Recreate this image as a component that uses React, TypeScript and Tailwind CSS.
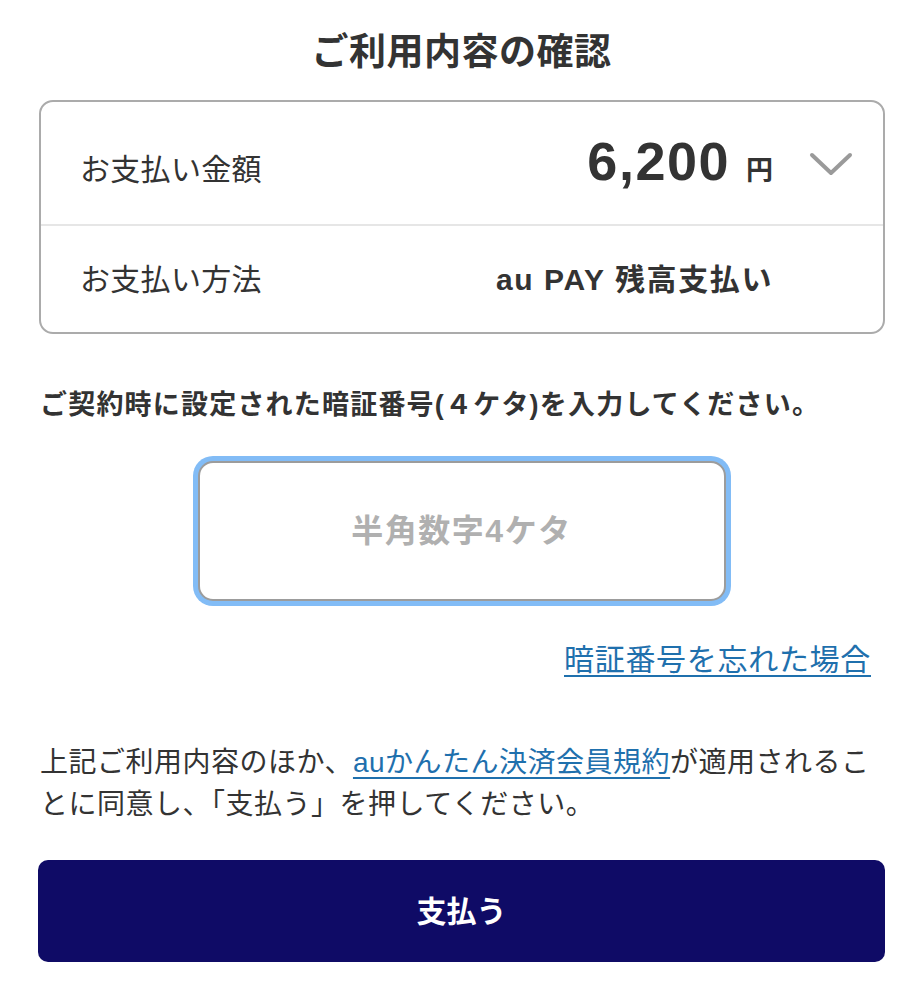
import React from 'react';

const font = { fontFamily: '"Liberation Sans", "Noto Sans CJK JP", sans-serif' };

const Chevron: React.FC = () => (
  <svg width="44" height="24" viewBox="0 0 44 24" fill="none">
    <path d="M3 3 L22 21 L41 3" stroke="#9a9a9a" strokeWidth="4" strokeLinecap="round" strokeLinejoin="round" />
  </svg>
);

const App: React.FC = () => {
  return (
    <div
      className="w-[923px] h-[999px] bg-white text-[#333] px-[38px] overflow-hidden"
      style={font}
    >
      {/* Title */}
      <div className="h-[100px] flex items-center justify-center pt-[4px]">
        <h1 className="text-[37px] font-bold leading-none tracking-[0.5px]">ご利用内容の確認</h1>
      </div>

      {/* Summary card */}
      <div className="border-2 border-[#ababab] rounded-[14px] ml-px">
        <div className="h-[124px] flex items-center pl-[39px] pr-[30px] border-b-2 border-[#e6e6e6]">
          <span className="text-[30px] tracking-[0.3px] mt-[12px]">お支払い金額</span>
          <div className="flex-1 flex items-baseline justify-end">
            <span className="text-[54px] font-bold leading-none tracking-[1.5px]">6,200</span>
            <span className="text-[27px] font-bold ml-[16px]">円</span>
          </div>
          <div className="w-[80px] flex justify-end pt-[2px]">
            <Chevron />
          </div>
        </div>
        <div className="h-[106px] flex items-center pl-[39px] pr-[30px]">
          <span className="text-[30px] tracking-[0.3px]">お支払い方法</span>
          <div className="flex-1 flex justify-end">
            <span className="text-[30px] font-bold tracking-[1.6px]">au PAY 残高支払い</span>
          </div>
          <div className="w-[80px]" />
        </div>
      </div>

      {/* PIN instruction */}
      <p className="mt-[53px] text-[27px] font-bold leading-[36px] ml-[2px] tracking-[1.2px]">
        ご契約時に設定された暗証番号(４ケタ)を入力してください。
      </p>

      {/* PIN input */}
      <div className="mt-[33px] flex justify-center">
        <div className="w-[538px] h-[150px] rounded-[20px] bg-[#82bcf6] p-[5px]">
          <div className="w-full h-full rounded-[15px] border-2 border-[#9c9c9c] bg-white flex items-center justify-center">
            <span className="text-[32px] font-bold text-[#b0b0b0] tracking-[1.5px]">半角数字4ケタ</span>
          </div>
        </div>
      </div>

      {/* Forgot link */}
      <div className="mt-[34px] flex justify-end pr-[14px]">
        <a className="text-[30px] text-[#1f70ad] underline underline-offset-[5px] decoration-[2px] leading-[40px] tracking-[0.7px]">
          暗証番号を忘れた場合
        </a>
      </div>

      {/* Agreement text */}
      <p className="mt-[62px] text-[28px] leading-[42px] ml-[2px] tracking-[0.5px]">
        上記ご利用内容のほか、<a className="text-[#1f70ad] underline underline-offset-[5px] decoration-[2px]">auかんたん決済会員規約</a>が適用されることに同意し、「支払う」を押してください。
      </p>

      {/* Pay button */}
      <button className="mt-[34px] w-full h-[102px] rounded-[10px] bg-[#0f0b66] text-white text-[30px] font-bold flex items-center justify-center">
        支払う
      </button>
    </div>
  );
};

export default App;
